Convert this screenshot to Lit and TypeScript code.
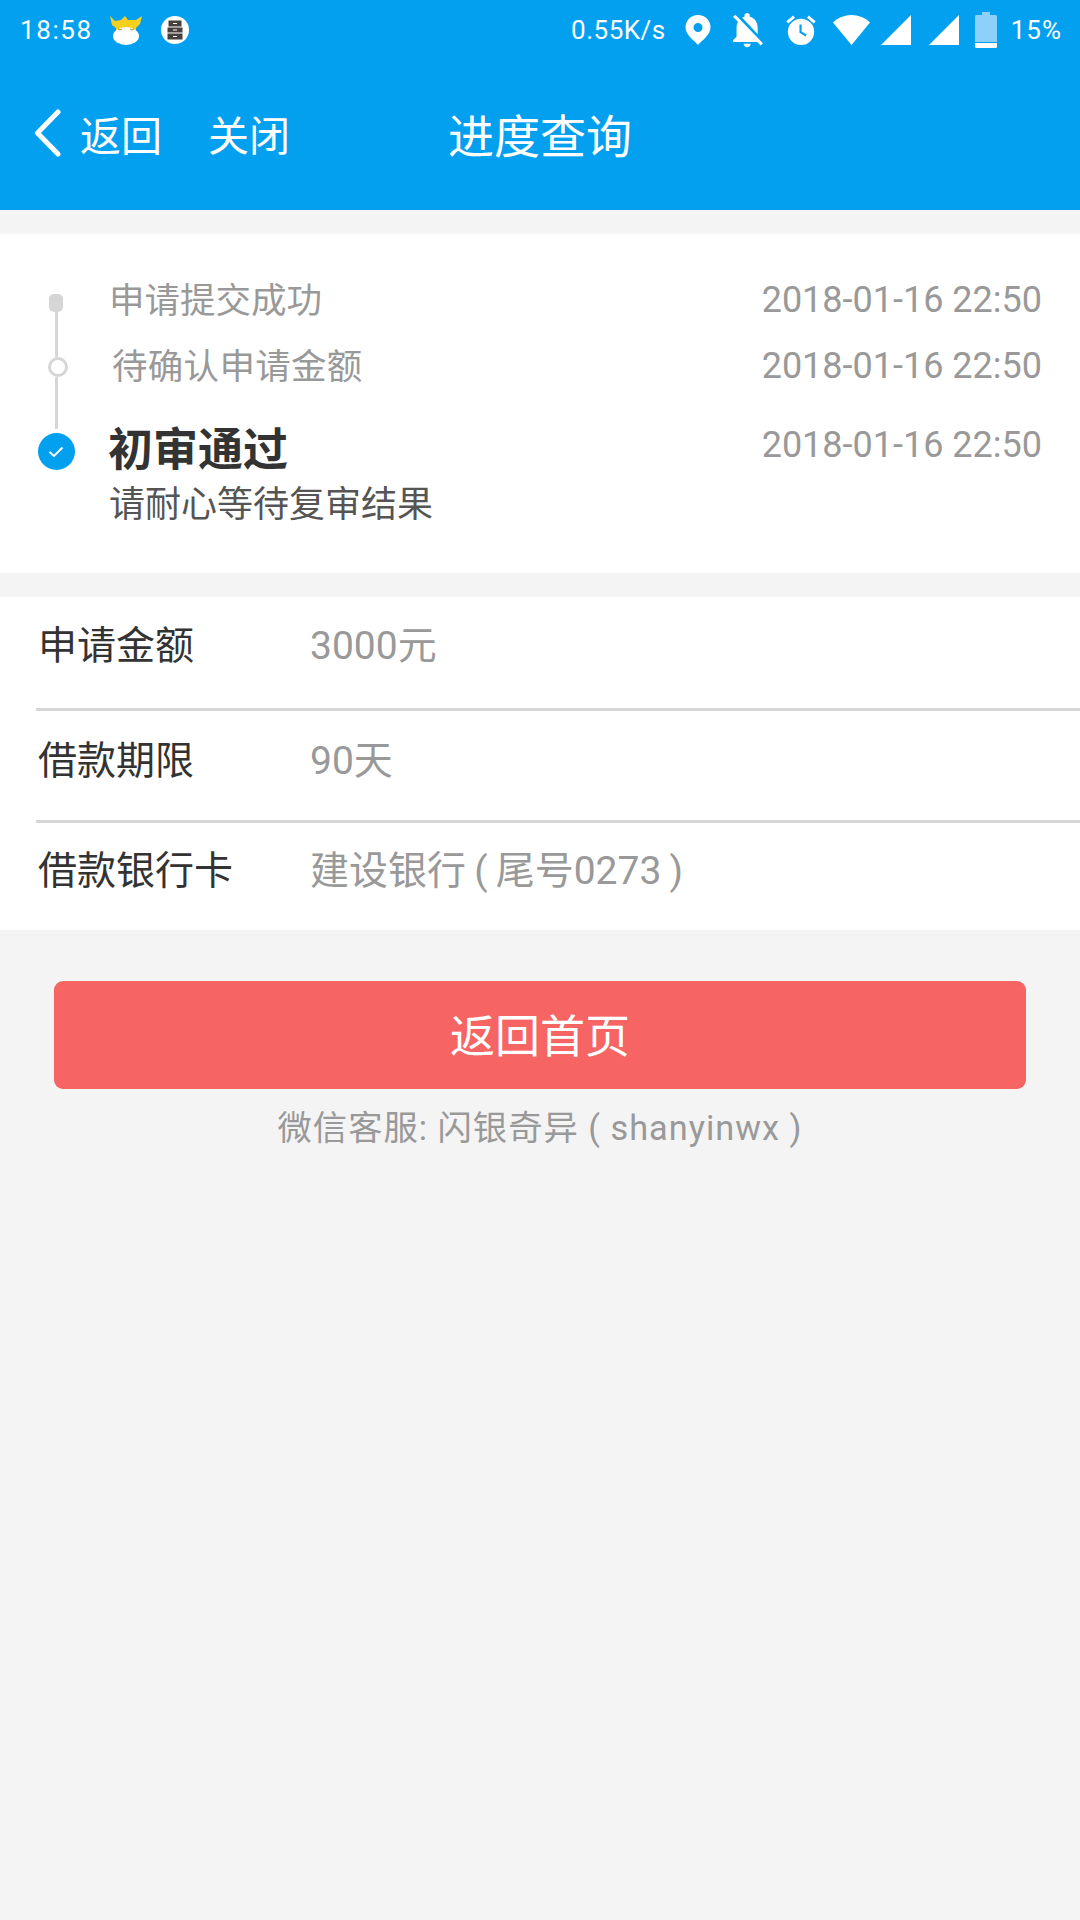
import { css, html, LitElement, svg } from "lit";
import { customElement } from "lit/decorators.js";

const cow = svg`<svg class="ic" width="34" height="30" viewBox="0 0 34 30">
  <path fill="#f7cf1d" d="M1 1 L6 6 L12 5 L16 1 L19 5 L27 5 L33 1 L31 9 L27 13 L27 17 L7 17 L7 13 L3 10 Z"/>
  <ellipse cx="17" cy="21" rx="13" ry="9" fill="#fff"/>
  <path d="M9 14q2 2 4 0M21 14q2 2 4 0" stroke="#a98d1a" stroke-width="1" fill="none"/>
</svg>`;

const drawer = svg`<svg class="ic" width="28" height="28" viewBox="0 0 28 28">
  <circle cx="14" cy="14" r="14" fill="#fff"/>
  <path fill="#453f3d" d="M7.5 4.5h13v6h-13zM6.500 11.500h15v5h-15zM6.500 17.500h15v6h-15z"/>
  <path d="M12 7.500h4M12 14h4M12 20.500h4" stroke="#fff" stroke-width="1" fill="none"/>
</svg>`;

const pin = svg`<svg class="ic" width="26" height="30" viewBox="0 0 26 30">
  <path fill-rule="evenodd" fill="#fff" d="M13 0C6 0 .500 5.500 .500 12.300 .500 20 9 25.500 13 30 17 25.500 25.500 20 25.500 12.300 25.500 5.500 20 0 13 0Zm0 8a4.500 4.500 0 1 1 0 9 4.500 4.500 0 0 1 0-9Z"/>
</svg>`;

const bell = svg`<svg class="ic" width="34" height="37" viewBox="3 2 19 21">
  <path fill="#fff" d="M20 18.690L7.840 6.140 5.270 3.490 4 4.760l2.800 2.800v.01c-.52.99-.8 2.160-.8 3.420v5l-2 2v1h13.730l2 2L21 19.720l-1-1.030zM12 22c1.110 0 2-.89 2-2h-4c0 1.110.89 2 2 2zm6-7.320V11c0-3.080-1.640-5.640-4.500-6.320V4c0-.83-.67-1.500-1.500-1.500s-1.500.67-1.500 1.500v.68c-.15.03-.29.08-.42.12-.1.03-.2.07-.3.11h-.01c-.2.08-.4.17-.59.27-.01 0-.01 0-.02.01L18 14.680z"/>
</svg>`;

const alarm = svg`<svg class="ic" width="30" height="30" viewBox="2 1.500 20 20.500">
  <path fill="#fff" d="M22 5.720l-4.600-3.860-1.290 1.530 4.600 3.860L22 5.720zM7.880 3.390L6.600 1.860 2 5.710l1.290 1.530 4.590-3.850z"/>
  <circle cx="12" cy="13" r="9" fill="#fff"/>
  <path fill="none" stroke="#03a0f0" stroke-width="1.500" d="M11.700 8v5.200l3.800 2.300"/>
</svg>`;

const wifi = svg`<svg class="ic" width="37" height="30" viewBox="0 0 37 30">
  <path fill="#fff" d="M0 7.500C5 2.800 11.500 0 18.500 0S32 2.800 37 7.500L18.500 30Z"/>
</svg>`;

const signal = svg`<svg class="ic" width="30" height="30" viewBox="0 0 30 30">
  <path fill="#fff" d="M30 0V30H0Z"/>
</svg>`;

const battery = svg`<svg class="ic" width="22" height="36" viewBox="0 0 22 36">
  <path fill="#8dd0fa" d="M7 0h8v3h5.500a1.500 1.500 0 0 1 1.500 1.500V30H0V4.500A1.500 1.500 0 0 1 1.500 3H7Z"/>
  <path fill="#fff" d="M0 31h22v3.500a1.500 1.500 0 0 1-1.500 1.500H1.500A1.500 1.500 0 0 1 0 34.500Z"/>
</svg>`;

const backArrow = svg`<svg class="ic" width="30" height="48" viewBox="0 0 30 48">
  <path d="M26 3 L5.500 24 L26 45" fill="none" stroke="#fff" stroke-width="5" stroke-linecap="round" stroke-linejoin="round"/>
</svg>`;

const check = svg`<svg width="16" height="12" viewBox="0 0 16 12">
  <path d="M1.500 6 L6 10 L14.500 1.500" fill="none" stroke="#fff" stroke-width="2"/>
</svg>`;

const steps = [
  { text: "申请提交成功", time: "2018-01-16 22:50", cls: "step" },
  { text: "待确认申请金额", time: "2018-01-16 22:50", cls: "step shifted" },
];

const details = [
  { label: "申请金额", value: "3000元" },
  { label: "借款期限", value: "90天" },
  { label: "借款银行卡", value: "建设银行 ( 尾号0273 )" },
];

@customElement("app-root")
export class AppRoot extends LitElement {
  static override styles = css`
    :host {
      display: block;
      width: 1080px;
      min-height: 1920px;
      background: #f4f4f4;
      font-family: Roboto, "Noto Sans CJK SC", sans-serif;
      color: #333;
    }

    .header {
      height: 210px;
      background: #03a0f0;
      color: #fff;
    }

    .status {
      display: flex;
      align-items: center;
      justify-content: space-between;
      height: 60px;
      padding: 0 18px 0 20px;
      font-size: 26px;
      letter-spacing: 1px;
    }

    .status-left,
    .status-right {
      display: flex;
      align-items: center;
    }

    .clock {
      letter-spacing: 1.600px;
    }

    .ic {
      display: block;
      flex: none;
    }

    .cow {
      margin-left: 16px;
    }

    .drawer {
      margin-left: 18px;
    }

    .speed {
      margin-right: 19px;
      letter-spacing: 0.500px;
    }

    .pin {
      margin-right: 20px;
    }

    .bell {
      margin-right: 21px;
    }

    .alarm {
      margin-right: 17px;
    }

    .wifi {
      margin-right: 11px;
    }

    .signal {
      margin-right: 18px;
    }

    .signal-last {
      margin-right: 16px;
    }

    .battery {
      margin-right: 14px;
    }

    .nav {
      display: grid;
      grid-template-columns: 1fr auto 1fr;
      align-items: center;
      height: 146px;
    }

    .nav-left {
      display: flex;
      align-items: center;
      padding-left: 32px;
      font-size: 41px;
    }

    .back {
      margin-right: 18px;
    }

    .close {
      margin-left: 46px;
    }

    .title {
      font-size: 46px;
    }

    .card {
      background: #fff;
    }

    .timeline {
      display: flex;
      height: 339px;
      margin-top: 24px;
      box-sizing: border-box;
      padding: 42px 38px 0 38px;
    }

    .rail {
      display: flex;
      flex-direction: column;
      align-items: center;
      width: 36px;
      margin: 18px 35px 0 0;
    }

    .dot {
      width: 14px;
      height: 18px;
      border-radius: 5px;
      background: #d6d6d6;
    }

    .line {
      width: 3px;
      background: #d6d6d6;
    }

    .line-a {
      height: 45px;
    }

    .line-b {
      height: 52px;
    }

    .ring {
      width: 20px;
      height: 20px;
      box-sizing: border-box;
      border: 3px solid #d6d6d6;
      border-radius: 50%;
      margin-left: 4px;
    }

    .tick {
      display: flex;
      align-items: center;
      justify-content: center;
      width: 37px;
      height: 37px;
      margin-top: 4px;
      border-radius: 50%;
      background: #03a0f0;
    }

    .rows {
      flex: 1;
    }

    .step {
      display: flex;
      justify-content: space-between;
      height: 66px;
      font-size: 35.500px;
      line-height: 50px;
      color: #999;
    }

    .step .time {
      margin-top: -1px;
    }

    .shifted .step-text {
      margin-left: 3px;
      letter-spacing: 0.300px;
    }

    .time {
      font-size: 36px;
      color: #999;
    }

    .current {
      display: flex;
      justify-content: space-between;
      margin-top: 15px;
    }

    .current-title {
      margin-left: -1px;
      font-size: 45px;
      font-weight: 700;
      line-height: 56px;
    }

    .current-sub {
      font-size: 36px;
      line-height: 50px;
      margin-top: 1px;
      color: #555;
    }

    .current .time {
      line-height: 50px;
      margin-top: -3px;
    }

    .details {
      margin-top: 24px;
      height: 333px;
    }

    .row {
      display: flex;
      box-sizing: border-box;
      height: 114px;
      margin-left: 36px;
      padding: 24px 0 0 4px;
      line-height: 50px;
      font-size: 39px;
      border-bottom: 3px solid #d6d6d6;
    }

    .row:nth-child(2) {
      height: 112px;
      padding-top: 25px;
    }

    .row:last-child {
      border-bottom: none;
      height: 107px;
      padding-top: 23px;
    }

    .row-label {
      width: 270px;
      flex: none;
      margin-left: -2px;
      padding-right: 2px;
      color: #333;
    }

    .row-value {
      color: #999;
      word-spacing: -1.500px;
    }

    .action {
      display: flex;
      align-items: center;
      justify-content: center;
      height: 104px;
      padding-bottom: 4px;
      margin: 51px 54px 0;
      border-radius: 9px;
      background: #f76464;
      color: #fff;
      font-size: 45px;
    }

    .footer {
      margin-top: 14px;
      text-align: center;
      font-size: 34.300px;
      line-height: 50px;
      color: #999;
      letter-spacing: 1px;
    }
  `;

  override render() {
    return html`
      <div class="header">
        <div class="status">
          <div class="status-left">
            <span class="clock">18:58</span>
            <span class="cow">${cow}</span>
            <span class="drawer">${drawer}</span>
          </div>
          <div class="status-right">
            <span class="speed">0.55K/s</span>
            <span class="pin">${pin}</span>
            <span class="bell">${bell}</span>
            <span class="alarm">${alarm}</span>
            <span class="wifi">${wifi}</span>
            <span class="signal">${signal}</span>
            <span class="signal-last">${signal}</span>
            <span class="battery">${battery}</span>
            <span>15%</span>
          </div>
        </div>
        <div class="nav">
          <div class="nav-left">
            <span class="back">${backArrow}</span>
            <span>返回</span>
            <span class="close">关闭</span>
          </div>
          <div class="title">进度查询</div>
          <div></div>
        </div>
      </div>

      <div class="card timeline">
        <div class="rail">
          <div class="dot"></div>
          <div class="line line-a"></div>
          <div class="ring"></div>
          <div class="line line-b"></div>
          <div class="tick">${check}</div>
        </div>
        <div class="rows">
          ${steps.map(
            (s) => html`
              <div class="${s.cls}">
                <span class="step-text">${s.text}</span>
                <span class="time">${s.time}</span>
              </div>
            `,
          )}
          <div class="current">
            <div>
              <div class="current-title">初审通过</div>
              <div class="current-sub">请耐心等待复审结果</div>
            </div>
            <span class="time">2018-01-16 22:50</span>
          </div>
        </div>
      </div>

      <div class="card details">
        ${details.map(
          (d) => html`
            <div class="row">
              <span class="row-label">${d.label}</span>
              <span class="row-value">${d.value}</span>
            </div>
          `,
        )}
      </div>

      <div class="action">返回首页</div>
      <div class="footer">微信客服: 闪银奇异 ( shanyinwx )</div>
    `;
  }
}
